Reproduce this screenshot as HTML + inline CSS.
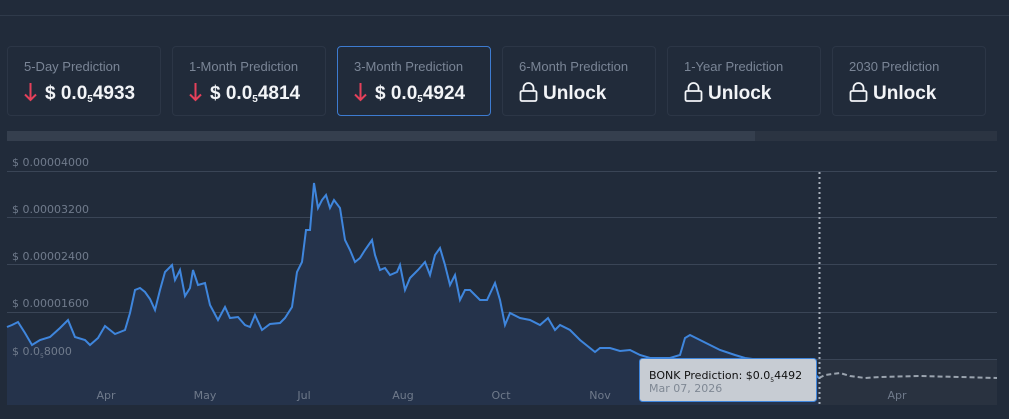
<!DOCTYPE html><html><head><style>
body{margin:0;width:1009px;height:419px;background:#212b3a;font-family:"Liberation Sans",sans-serif;overflow:hidden;position:relative}
.top{position:absolute;left:0;right:0;top:15px;border-top:1px solid #2f3a4a}
.card{position:absolute;top:46px;width:152px;height:68px;border:1px solid #2c3646;border-radius:4px;box-sizing:content-box}
.card.sel{border-color:#3d7bd0}
.lab{position:absolute;left:16px;top:12px;font-size:13px;color:#7a8596}
.val{position:absolute;left:16px;top:35px;font-size:19px;font-weight:bold;color:#f2f4f7;white-space:nowrap}
.val sub{font-size:10px;vertical-align:-3px}
.arr{display:inline-block;vertical-align:-3px;margin-right:8px}
.lock{display:inline-block;vertical-align:-3px;margin-right:5px}
</style></head><body>
<div class="top"></div>
<div class="card" style="left:7px"><div class="lab">5-Day Prediction</div><div class="val"><svg class="arr" width="13" height="20" viewBox="0 0 13 20"><path d="M6.5 1V18M1 12.5L6.5 18L12 12.5" fill="none" stroke="#e5405a" stroke-width="2"/></svg>$ 0.0<sub>5</sub>4933</div></div>
<div class="card" style="left:172px"><div class="lab">1-Month Prediction</div><div class="val"><svg class="arr" width="13" height="20" viewBox="0 0 13 20"><path d="M6.5 1V18M1 12.5L6.5 18L12 12.5" fill="none" stroke="#e5405a" stroke-width="2"/></svg>$ 0.0<sub>5</sub>4814</div></div>
<div class="card sel" style="left:337px"><div class="lab">3-Month Prediction</div><div class="val"><svg class="arr" width="13" height="20" viewBox="0 0 13 20"><path d="M6.5 1V18M1 12.5L6.5 18L12 12.5" fill="none" stroke="#e5405a" stroke-width="2"/></svg>$ 0.0<sub>5</sub>4924</div></div>
<div class="card" style="left:502px"><div class="lab">6-Month Prediction</div><div class="val"><svg class="lock" width="19" height="20" viewBox="0 0 19 20"><path d="M4.5 9V6a5 5 0 0 1 10 0v3" fill="none" stroke="#f2f4f7" stroke-width="1.8"/><rect x="1.5" y="9" width="16" height="10" rx="1.5" fill="none" stroke="#f2f4f7" stroke-width="1.8"/></svg>Unlock</div></div>
<div class="card" style="left:667px"><div class="lab">1-Year Prediction</div><div class="val"><svg class="lock" width="19" height="20" viewBox="0 0 19 20"><path d="M4.5 9V6a5 5 0 0 1 10 0v3" fill="none" stroke="#f2f4f7" stroke-width="1.8"/><rect x="1.5" y="9" width="16" height="10" rx="1.5" fill="none" stroke="#f2f4f7" stroke-width="1.8"/></svg>Unlock</div></div>
<div class="card" style="left:832px"><div class="lab">2030 Prediction</div><div class="val"><svg class="lock" width="19" height="20" viewBox="0 0 19 20"><path d="M4.5 9V6a5 5 0 0 1 10 0v3" fill="none" stroke="#f2f4f7" stroke-width="1.8"/><rect x="1.5" y="9" width="16" height="10" rx="1.5" fill="none" stroke="#f2f4f7" stroke-width="1.8"/></svg>Unlock</div></div>
<svg style="position:absolute;left:0;top:0" width="1009" height="419">
<rect x="7" y="131" width="990" height="10" fill="#2b3442"/>
<rect x="7" y="131" width="748" height="10" fill="#353f4e"/>
<rect x="819" y="360" width="178" height="45" fill="#293240"/>
<g stroke="#3a4556" stroke-width="1"><line x1="7" x2="997" y1="171.5" y2="171.5"/><line x1="7" x2="997" y1="217.5" y2="217.5"/><line x1="7" x2="997" y1="264.5" y2="264.5"/><line x1="7" x2="997" y1="312.5" y2="312.5"/><line x1="7" x2="997" y1="359.5" y2="359.5"/></g>
<path fill="#25334b" d="M7 327L12 325L18 322L25 333L32 345L40 340L50 337L60 328L68 320L75 337L85 340L90 345L98 338L105 326L115 334L125 330L130 313L135 290L140 288L145 292L150 299L155 310L160 290L165 272L172 265L175 280L180 270L185 296L190 288L193 270L198 285L205 283L210 305L218 320L225 307L230 318L238 317L245 325L250 327L255 315L262 330L270 324L280 323L285 318L292 307L297 272L302 262L306 230L310 230L314 183L318 208L322 200L326 195L330 208L334 200L340 208L345 240L350 250L355 262L360 258L365 250L372 240L375 255L380 270L385 268L390 275L397 272L400 265L405 290L410 278L418 270L425 262L430 275L435 255L440 248L445 265L450 285L455 275L460 300L465 290L470 290L475 295L480 300L487 300L495 283L500 300L505 325L510 313L520 318L530 320L540 325L548 318L555 330L560 325L570 330L580 340L590 348L595 352L600 348L610 348L620 351L630 350L640 355L650 358L670 358L680 355L685 338L690 335L700 340L710 345L720 350L735 355L745 358L760 360L775 365L790 363L800 368L810 370L819 378L819 405L7 405Z"/>
<g font-size="11" fill="#707b8c" font-family="DejaVu Sans,sans-serif"><text x="12" y="166">$ 0.00004000</text><text x="12" y="213">$ 0.00003200</text><text x="12" y="260">$ 0.00002400</text><text x="12" y="307">$ 0.00001600</text><text x="12" y="355">$ 0.0<tspan font-size="6" dy="3">5</tspan><tspan dy="-3">8000</tspan></text></g>
<path fill="none" stroke="#3f86dd" stroke-width="2" d="M7 327L12 325L18 322L25 333L32 345L40 340L50 337L60 328L68 320L75 337L85 340L90 345L98 338L105 326L115 334L125 330L130 313L135 290L140 288L145 292L150 299L155 310L160 290L165 272L172 265L175 280L180 270L185 296L190 288L193 270L198 285L205 283L210 305L218 320L225 307L230 318L238 317L245 325L250 327L255 315L262 330L270 324L280 323L285 318L292 307L297 272L302 262L306 230L310 230L314 183L318 208L322 200L326 195L330 208L334 200L340 208L345 240L350 250L355 262L360 258L365 250L372 240L375 255L380 270L385 268L390 275L397 272L400 265L405 290L410 278L418 270L425 262L430 275L435 255L440 248L445 265L450 285L455 275L460 300L465 290L470 290L475 295L480 300L487 300L495 283L500 300L505 325L510 313L520 318L530 320L540 325L548 318L555 330L560 325L570 330L580 340L590 348L595 352L600 348L610 348L620 351L630 350L640 355L650 358L670 358L680 355L685 338L690 335L700 340L710 345L720 350L735 355L745 358L760 360L775 365L790 363L800 368L810 370L819 378"/>
<path fill="none" stroke="#9aa3ae" stroke-width="2" stroke-dasharray="5,3" d="M819 378L825 375L840 373L850 376L865 378L880 377L920 376L960 377L997 378"/>
<line x1="819.5" x2="819.5" y1="172" y2="405" stroke="#a9b1bc" stroke-width="2" stroke-dasharray="2,3"/>
<g font-size="11" fill="#6f7a8b" font-family="DejaVu Sans,sans-serif" text-anchor="middle"><text x="106" y="399">Apr</text><text x="205" y="399">May</text><text x="304" y="399">Jul</text><text x="403" y="399">Aug</text><text x="501" y="399">Oct</text><text x="600" y="399">Nov</text><text x="897" y="399">Apr</text></g>
<rect x="639.5" y="358.5" width="177" height="43" rx="3" fill="#c7ccd3" stroke="#3f86dd"/>
<g font-family="DejaVu Sans,sans-serif" font-size="11"><text x="649" y="379" fill="#111">BONK Prediction: $0.0<tspan font-size="6" dy="3">5</tspan><tspan dy="-3">4492</tspan></text><text x="649" y="392" fill="#7f8894">Mar 07, 2026</text></g>
</svg>
</body></html>
